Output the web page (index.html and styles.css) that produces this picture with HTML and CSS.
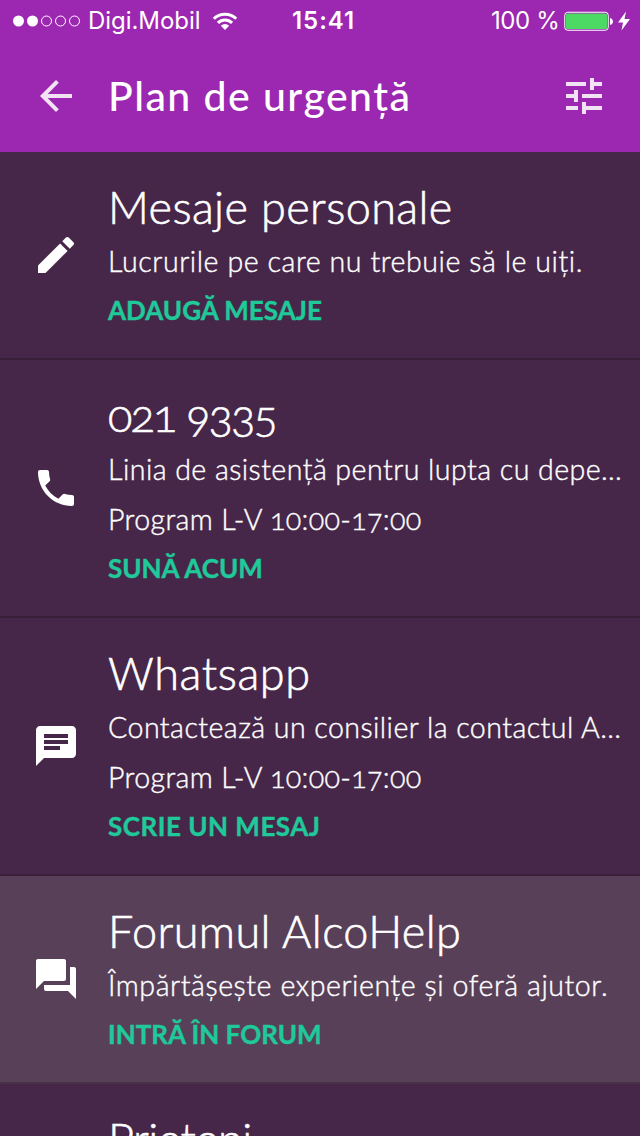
FILE: index.html
```html
<!DOCTYPE html>
<html lang="ro">
<head>
<meta charset="utf-8">
<title>Plan de urgență</title>
<link rel="stylesheet" href="styles.css">
</head>
<body>
<header class="top">
  <div class="status">
    <div class="carrier">
      <svg class="signal" width="68" height="12" viewBox="0 0 68 12"><g fill="#fff"><circle cx="5.5" cy="6" r="5.5"/><circle cx="19.5" cy="6" r="5.5"/></g><g fill="none" stroke="#fff"><circle cx="33.5" cy="6" r="5"/><circle cx="47.5" cy="6" r="5"/><circle cx="61.5" cy="6" r="5"/></g></svg>
      <span class="network">Digi.Mobil</span>
      <svg class="wifi" width="26" height="20" viewBox="0 0 26 20"><g fill="none" stroke="#fff" stroke-width="3"><path d="M1.8 7.8a15.8 15.8 0 0 1 22.4 0"/><path d="M5.9 11.9a10 10 0 0 1 14.2 0"/></g><path d="M8.8 14.8a6 6 0 0 1 8.4 0L13 19z" fill="#fff"/></svg>
    </div>
    <time class="clock">15:41</time>
    <div class="power">
      <span class="percent">100 %</span>
      <svg class="battery" width="49" height="20" viewBox="0 0 49 20"><rect x=".75" y="1.25" width="43.5" height="18" rx="3" fill="none" stroke="#fff"/><rect x="2" y="2.500" width="41" height="15.500" rx="1.5" fill="#4cd964"/><path d="M46 7c4 1 4 6 0 7z" fill="#fff"/></svg>
      <svg class="bolt" width="12" height="20" viewBox="0 0 12 20"><path d="M8 .5 0 11.5h5L3.5 19.500 12 8H6.500z" fill="#fff"/></svg>
    </div>
  </div>
  <div class="bar">
    <svg class="icon dim" viewBox="0 0 24 24"><path d="M20 11H7.830l5.590-5.590L12 4l-8 8 8 8 1.410-1.410L7.830 13H20v-2z"/></svg>
    <h1 class="heading">Plan de urgență</h1>
    <svg class="icon dim" viewBox="0 0 24 24"><path d="M3 17v2h6v-2H3zM3 5v2h10V5H3zm10 16v-2h8v-2h-8v-2h-2v6h2zM7 9v2H3v2h4v2h2V9H7zm14 4v-2H11v2h10zm-6-4h2V7h4V5h-4V3h-2v6z"/></svg>
  </div>
</header>
<main class="list">
  <section class="row">
    <svg class="icon" viewBox="0 0 24 24"><path d="M3 17.250V21h3.750L17.810 9.940l-3.750-3.750L3 17.250zM20.710 7.040c.390-.390.390-1.020 0-1.410l-2.340-2.340c-.390-.390-1.020-.390-1.410 0l-1.830 1.830 3.750 3.750 1.830-1.830z"/></svg>
    <div class="body">
      <h2 class="title personal">Mesaje personale</h2>
      <p class="desc">Lucrurile pe care nu trebuie să le uiți.</p>
      <a class="action">ADAUGĂ MESAJE</a>
    </div>
  </section>
  <section class="row">
    <svg class="icon" viewBox="0 0 24 24"><path d="M6.620 10.790c1.440 2.830 3.760 5.140 6.590 6.590l2.200-2.200c.270-.270.670-.360 1.020-.240 1.120.370 2.330.570 3.570.570.550 0 1 .450 1 1V20c0 .550-.450 1-1 1-9.390 0-17-7.610-17-17 0-.550.450-1 1-1h3.500c.550 0 1 .450 1 1 0 1.250.200 2.450.570 3.570.110.350.030.740-.250 1.020l-2.200 2.200z"/></svg>
    <div class="body">
      <h2 class="title phone">021 9335</h2>
      <p class="desc helpline">Linia de asistență pentru lupta cu depe…</p>
      <p class="desc hours">Program L-V 10:00-17:00</p>
      <a class="action">SUNĂ ACUM</a>
    </div>
  </section>
  <section class="row">
    <svg class="icon" viewBox="0 0 24 24"><path fill-rule="evenodd" d="M20 2H4c-1.100 0-1.990.900-1.990 2L2 22l4-4h14c1.100 0 2-.900 2-2V4c0-1.100-.900-2-2-2zM6 9h12v2H6V9zm8 5H6v-2h8v2zm4-6H6V6h12v2z"/></svg>
    <div class="body">
      <h2 class="title whatsapp">Whatsapp</h2>
      <p class="desc counsel">Contactează un consilier la contactul A…</p>
      <p class="desc hours">Program L-V 10:00-17:00</p>
      <a class="action write">SCRIE UN MESAJ</a>
    </div>
  </section>
  <section class="row active">
    <svg class="icon" viewBox="0 0 24 24"><path d="M21 6h-2v9H6v2c0 .550.450 1 1 1h11l4 4V7c0-.550-.450-1-1-1zm-4 6V3c0-.550-.450-1-1-1H3c-.550 0-1 .450-1 1v14l4-4h10c.550 0 1-.450 1-1z"/></svg>
    <div class="body">
      <h2 class="title forum">Forumul AlcoHelp</h2>
      <p class="desc">Împărtășește experiențe și oferă ajutor.</p>
      <a class="action enter">INTRĂ ÎN FORUM</a>
    </div>
  </section>
  <section class="row">
    <div class="icon"></div>
    <div class="body">
      <h2 class="title friends">Prieteni</h2>
    </div>
  </section>
</main>
</body>
</html>
```
FILE: styles.css
```css
* { box-sizing: border-box; }

body {
  margin: 0;
  height: 1136px;
  overflow: hidden;
  display: flex;
  flex-direction: column;
  background: #472749;
  color: #fff;
  font-family: Lato, "Open Sans", sans-serif;
}

.top { flex: none; height: 152px; background: #9c27b0; }

.status {
  height: 40px;
  padding: 1px 10px 0 13px;
  display: grid;
  grid-template-columns: 279px 1fr auto;
  align-items: center;
  font: 400 24px/40px Inter, Roboto, sans-serif;
}
.carrier, .power { display: flex; align-items: center; white-space: nowrap; }
.network { margin-left: 7px; width: 124px; letter-spacing: -.05px; }
.clock { font-weight: 600; letter-spacing: .95px; }
.percent { width: 73px; letter-spacing: -.4px; }
.bolt { margin-left: 5px; }

.bar {
  height: 112px;
  padding: 0 32px;
  display: flex;
  align-items: center;
}
.heading {
  flex: 1;
  margin: 0 0 0 28px;
  font-size: 41px;
  font-weight: 500;
  line-height: 48px;
  letter-spacing: 1.45px;
}

.icon { flex: none; width: 48px; height: 48px; fill: #fff; }
.dim { opacity: .87; }

.list { flex: 1; min-height: 0; overflow: hidden; }
.row {
  display: flex;
  align-items: center;
  padding: 31px 0 24px 32px;
  border-bottom: 2px solid #391f3a;
}
.row .icon { margin-top: -7px; }
.active { background: #594059; border-bottom-color: #473347; }
.body { margin-left: 28px; flex: 1; white-space: nowrap; }

.title {
  margin: 0 0 5px;
  font-size: 45px;
  font-weight: 300;
  line-height: 48px;
  letter-spacing: .4px;
  font-variant-numeric: oldstyle-nums;
  -webkit-text-stroke: .6px #fff;
}
.phone { letter-spacing: -1.8px; }
.whatsapp { letter-spacing: .6px; }
.friends { letter-spacing: -.6px; }

.desc {
  margin: 0;
  font-size: 28.6px;
  font-weight: 300;
  line-height: 50px;
  letter-spacing: .55px;
  font-variant-numeric: oldstyle-nums;
  -webkit-text-stroke: .4px #fff;
}
.helpline, .counsel { letter-spacing: .44px; }
.hours { letter-spacing: .34px; }

.action {
  display: block;
  font-size: 26px;
  font-weight: 700;
  line-height: 48px;
  color: #20c99a;
  -webkit-text-stroke: .4px #20c99a;
}
.write { letter-spacing: .5px; }
```
